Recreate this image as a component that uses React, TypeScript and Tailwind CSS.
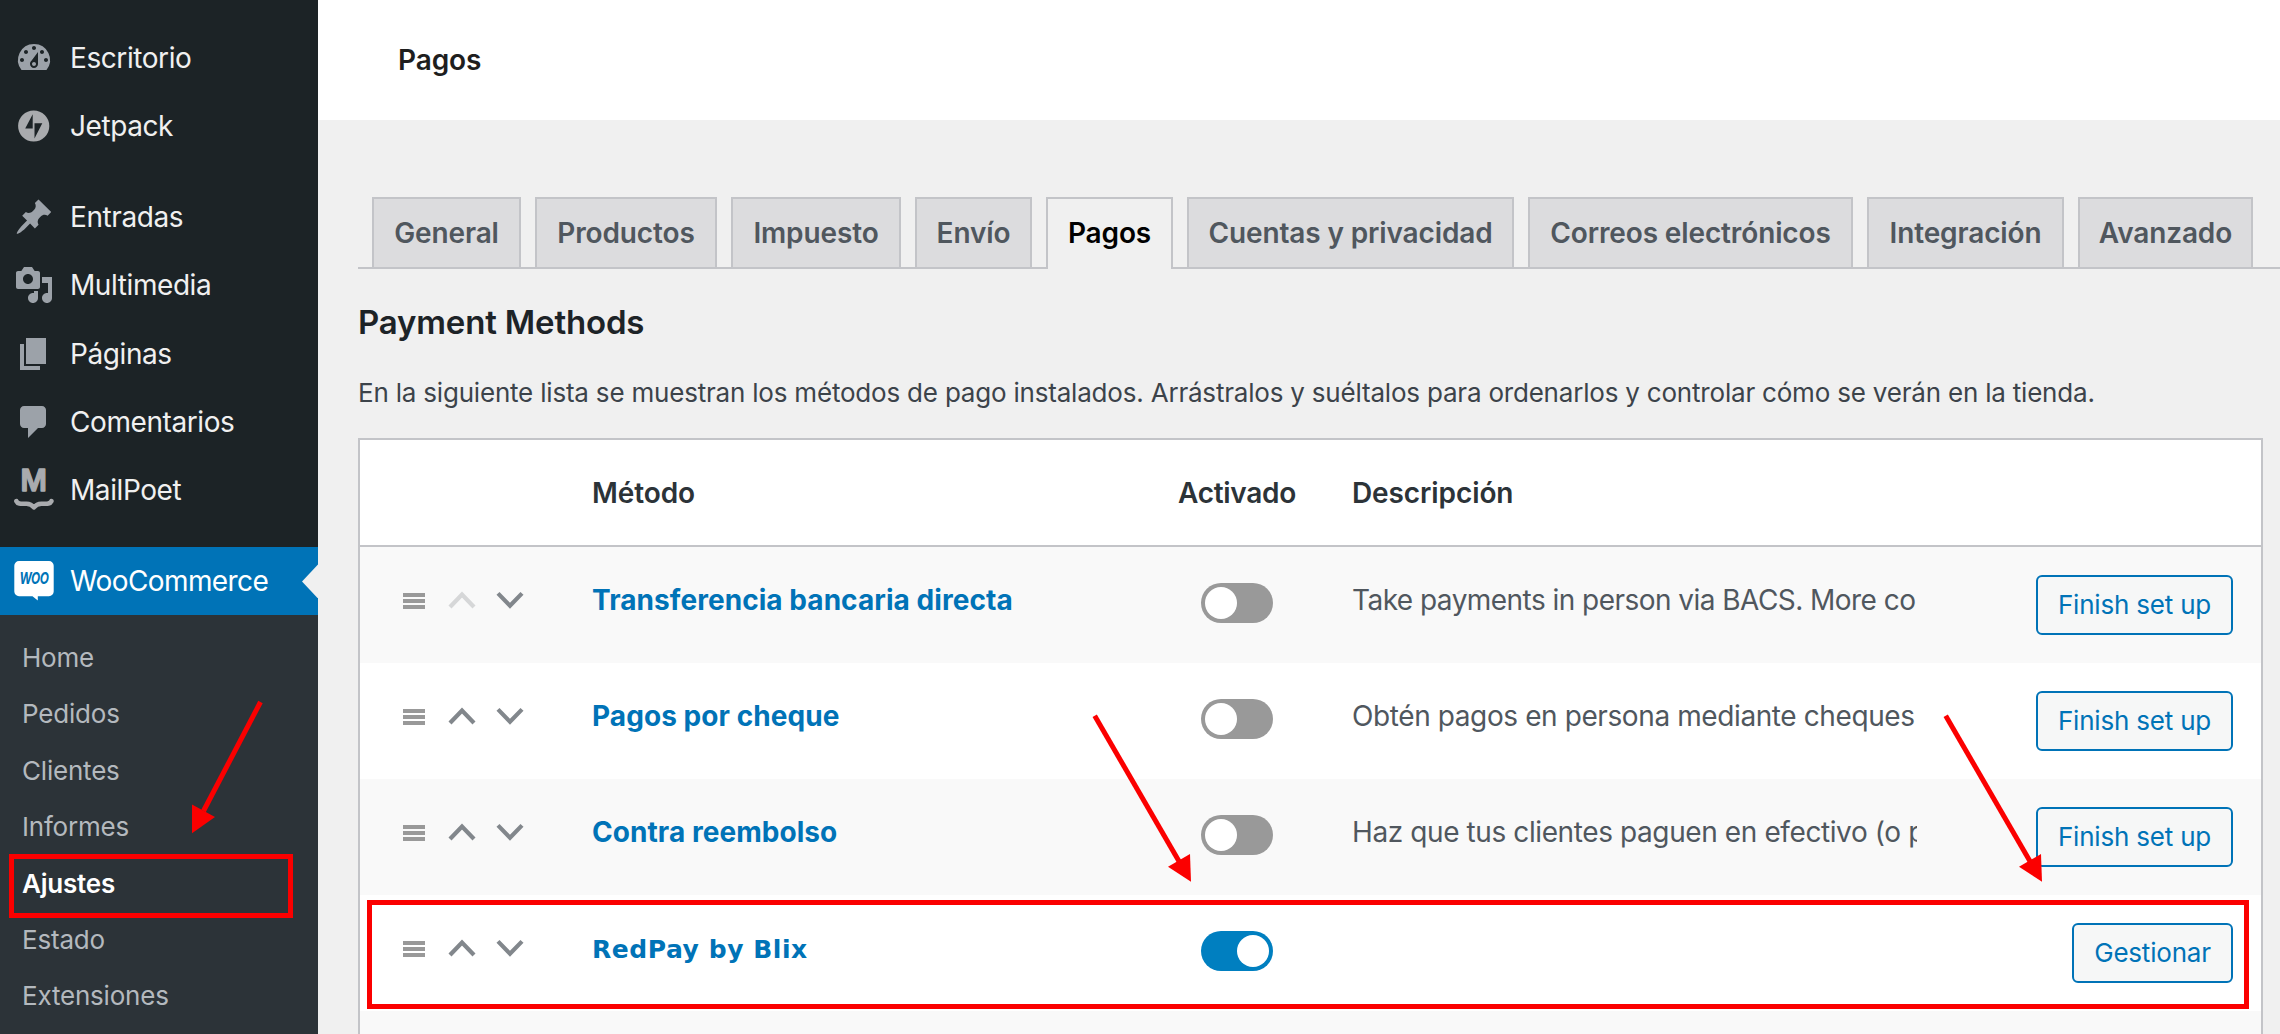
import type { ReactNode } from 'react';
import clsx from 'clsx';

function Dashicon({ d }: { d: string }) {
  return (
    <svg viewBox="0 0 20 20" className="h-10 w-10 fill-[#9ca2a9]">
      <path d={d} />
    </svg>
  );
}

const DASHBOARD =
  'M3.76 16h12.48A7.998 7.998 0 0 0 10 3a7.998 7.998 0 0 0-6.24 13zM10 4c.55 0 1 .45 1 1s-.45 1-1 1-1-.45-1-1 .45-1 1-1zM6 6c.55 0 1 .45 1 1s-.45 1-1 1-1-.45-1-1 .45-1 1-1zm8 0c.55 0 1 .45 1 1s-.45 1-1 1-1-.45-1-1 .45-1 1-1zm-5.37 5.55L12 7v6c0 1.1-.9 2-2 2s-2-.9-2-2c0-.57.24-1.08.63-1.45zM4 10c.55 0 1 .45 1 1s-.45 1-1 1-1-.45-1-1 .45-1 1-1zm12 0c.55 0 1 .45 1 1s-.45 1-1 1-1-.45-1-1 .45-1 1-1zm-5 3c0-.55-.45-1-1-1s-1 .45-1 1 .45 1 1 1 1-.45 1-1z';
const PIN =
  'M10.44 3.02l1.82-1.82 6.36 6.35-1.83 1.82c-1.05-.68-2.48-.57-3.41.36l-.75.75c-.92.93-1.04 2.35-.35 3.41l-1.83 1.82-2.41-2.41-2.8 2.79c-.42.42-3.38 2.71-3.8 2.29s1.86-3.39 2.28-3.81l2.79-2.79L4.1 9.36l1.83-1.82c1.05.69 2.48.57 3.4-.36l.75-.75c.93-.92 1.05-2.35.36-3.41z';
const MEDIA =
  'M13 11V4c0-.55-.45-1-1-1h-1.67L9 1H5L3.67 3H2c-.55 0-1 .45-1 1v7c0 .55.45 1 1 1h10c.55 0 1-.45 1-1zM7 4.500c1.380 0 2.500 1.120 2.500 2.500S8.380 9.500 7 9.500 4.500 8.380 4.500 7 5.620 4.500 7 4.500zM14 6h5v10.500c0 1.380-1.120 2.500-2.500 2.500S14 17.880 14 16.500s1.120-2.500 2.500-2.500c.17 0 .34.02.5.05V9h-3V6zm-4 8.050V13h2v3.500c0 1.380-1.120 2.500-2.500 2.500S7 17.880 7 16.500 8.120 14 9.500 14c.17 0 .34.02.5.05z';
const PAGES = 'M6 15V2h10v13H6zm-1 1h8v2H3V5h2v11z';
const COMMENTS =
  'M5 2h9c1.1 0 2 .9 2 2v7c0 1.1-.9 2-2 2h-2l-5 5v-5H5c-1.1 0-2-.9-2-2V4c0-1.1.9-2 2-2z';

function JetpackIcon() {
  return (
    <svg viewBox="0 0 40 40" className="h-10 w-10">
      <circle cx="19.7" cy="20" r="15.6" fill="#a9abae" />
      <path d="M18.7 8.3V22.6H11.2ZM20.5 17.3H28.3L20.5 32.4Z" fill="#1c2326" />
    </svg>
  );
}

function MailPoetIcon() {
  return (
    <svg viewBox="0 0 44 44" className="h-11 w-11 overflow-visible">
      <text
        x="21.6"
        y="23.4"
        textAnchor="middle"
        textLength="26"
        lengthAdjust="spacingAndGlyphs"
        className="fill-[#a9abae] stroke-[#a9abae] font-[Inter] text-[30px] font-semibold"
        strokeWidth="1.4"
        strokeLinejoin="round"
      >
        M
      </text>
      <path
        d="M4.400 33.200C6 36.600 10 35.600 14.500 35.700C18.500 35.800 20 36.900 21.900 39.400C23.800 36.900 25.300 35.800 29.300 35.700C33.800 35.600 37.800 36.600 39.400 33.200"
        fill="none"
        stroke="#a9abae"
        strokeWidth="4.6"
        strokeLinecap="round"
        strokeLinejoin="round"
      />
    </svg>
  );
}

function WooIcon() {
  return (
    <svg viewBox="0 0 40 40" className="h-10 w-10 overflow-visible">
      <path
        d="M5 0H35A4.700 4.700 0 0 1 39.700 4.700V30.500A4.700 4.700 0 0 1 35 35.200H23.800V39.600L18.500 35.200H5A4.700 4.700 0 0 1 .3 30.500V4.700A4.700 4.700 0 0 1 5 0Z"
        fill="#fff"
      />
      <text
        x="5.5"
        y="23.4"
        textLength="29"
        lengthAdjust="spacingAndGlyphs"
        className="fill-[#0073b7] font-[Inter] text-[16.500px] font-bold italic"
      >
        WOO
      </text>
    </svg>
  );
}

type MenuEntry = { label: string; icon: ReactNode };

const firstGroup: MenuEntry[] = [
  { label: 'Escritorio', icon: <Dashicon d={DASHBOARD} /> },
  { label: 'Jetpack', icon: <JetpackIcon /> },
];
const secondGroup: MenuEntry[] = [
  { label: 'Entradas', icon: <Dashicon d={PIN} /> },
  { label: 'Multimedia', icon: <Dashicon d={MEDIA} /> },
  { label: 'Páginas', icon: <Dashicon d={PAGES} /> },
  { label: 'Comentarios', icon: <Dashicon d={COMMENTS} /> },
  { label: 'MailPoet', icon: <MailPoetIcon /> },
];
const submenu = ['Home', 'Pedidos', 'Clientes', 'Informes', 'Ajustes', 'Estado', 'Extensiones'];

function MenuItem({ label, icon, active }: MenuEntry & { active?: boolean }) {
  return (
    <li
      className={clsx(
        'relative flex h-[68.4px] items-center text-[28px]',
        active ? 'bg-[#0073b7] tracking-[-0.6px] text-white' : 'tracking-[-0.42px] text-[#f0f0f0]',
      )}
    >
      <span className="flex w-[70px] shrink-0 justify-center pr-[2px]">{icon}</span>
      {label}
      {active && (
        <span className="absolute top-[17.5px] right-0 h-[34px] w-4 bg-[#f0f0f0] [clip-path:polygon(100%_0,0_50%,100%_100%)]" />
      )}
    </li>
  );
}

function Sidebar() {
  return (
    <nav className="relative flex w-[318px] shrink-0 flex-col bg-[#1c2326] pt-[23.8px]">
      <ul className="flex flex-col">
        {firstGroup.map((m) => (
          <MenuItem key={m.label} {...m} />
        ))}
      </ul>
      <ul className="mt-[22px] flex flex-col">
        {secondGroup.map((m) => (
          <MenuItem key={m.label} {...m} />
        ))}
      </ul>
      <ul className="mt-[22.4px] flex flex-col">
        <MenuItem label="WooCommerce" icon={<WooIcon />} active />
      </ul>
      <ul className="flex grow flex-col bg-[#2c3338] pt-[14px] text-[26px] tracking-[-0.2px] text-[#b4b9be]">
        {submenu.map((s) => (
          <li
            key={s}
            className={clsx(
              'flex h-[56.4px] shrink-0 items-center pl-[22px]',
              s === 'Ajustes' && 'font-semibold text-white',
            )}
          >
            {s}
          </li>
        ))}
      </ul>
    </nav>
  );
}

const tabs = [
  { label: 'General', width: 'w-[149px]' },
  { label: 'Productos', width: 'w-[182px]' },
  { label: 'Impuesto', width: 'w-[170px]' },
  { label: 'Envío', width: 'w-[117px]' },
  { label: 'Pagos', width: 'w-[127px]', active: true },
  { label: 'Cuentas y privacidad', width: 'w-[327px]' },
  { label: 'Correos electrónicos', width: 'w-[325px]' },
  { label: 'Integración', width: 'w-[197px]' },
  { label: 'Avanzado', width: 'w-[175px]' },
];

function Tabs() {
  return (
    <div className="flex h-[72px] gap-[14px] border-b-2 border-[#c3c4c8] pl-[14px] text-[28px] font-semibold tracking-[-0.13px]">
      {tabs.map((t) => (
        <div
          key={t.label}
          className={clsx(
            'flex shrink-0 items-center justify-center border-2 border-b-0 border-[#c3c4c8] whitespace-nowrap',
            t.width,
            t.active ? '-mb-[2px] bg-[#f0f0f0] pb-[2px] text-black' : 'bg-[#dcdcde] text-[#50575e]',
          )}
        >
          {t.label}
        </div>
      ))}
    </div>
  );
}

type Method = { name: string; desc: string; button: string; on?: boolean; first?: boolean };

const methods: Method[] = [
  { name: 'Transferencia bancaria directa', desc: 'Take payments in person via BACS. More co', button: 'Finish set up', first: true },
  { name: 'Pagos por cheque', desc: 'Obtén pagos en persona mediante cheques', button: 'Finish set up' },
  { name: 'Contra reembolso', desc: 'Haz que tus clientes paguen en efectivo (o p', button: 'Finish set up' },
  { name: 'RedPay by Blix', desc: '', button: 'Gestionar', on: true },
];

function SortHandles({ first }: { first?: boolean }) {
  return (
    <div className="flex pt-[44px] pl-[43px]">
      <svg viewBox="0 0 22 20" className="h-5 w-[22px] fill-[#999]">
        <path d="M0 2H22V6H0ZM0 8H22V12H0ZM0 14H22V18H0Z" />
      </svg>
      <svg
        viewBox="0 0 28 20"
        className={clsx('ml-[23px] h-5 w-7 fill-none', first ? 'stroke-[#d6d7d8]' : 'stroke-[#82878c]')}
        strokeWidth="4.2"
      >
        <path d="M2 16L14 3.6L26 16" />
      </svg>
      <svg viewBox="0 0 28 20" className="ml-5 h-5 w-7 fill-none stroke-[#82878c]" strokeWidth="4.2">
        <path d="M2 2.4L14 14.8L26 2.4" />
      </svg>
    </div>
  );
}

function Toggle({ on }: { on?: boolean }) {
  return (
    <span
      className={clsx(
        'flex h-10 w-[72px] rounded-full p-1',
        on ? 'justify-end bg-[#007fc0]' : 'bg-[#999]',
      )}
    >
      <span className="h-8 w-8 rounded-full bg-white" />
    </span>
  );
}

function MethodsTable() {
  return (
    <div className="mt-[26px] w-[1905px] grow border-2 border-b-0 border-[#c3c4c8] bg-white">
      <div className="grid h-[107px] grid-cols-[232px_580px_130px_1fr] items-center border-b-2 border-[#c3c4c8] text-[28px] font-semibold tracking-[-0.1px] text-[#2c3338]">
        <span />
        <span>Método</span>
        <span className="text-center tracking-[-0.3px]">Activado</span>
        <span className="pl-[50px]">Descripción</span>
      </div>
      {methods.map((m) => (
        <div
          key={m.name}
          className="grid h-[116px] grid-cols-[232px_580px_130px_615px_1fr] items-start text-[28px] leading-9 even:bg-[#f9f9f9]"
        >
          <SortHandles first={m.first} />
          <a
            className={clsx(
              'font-bold text-[#0073b7]',
              m.on
                ? 'pt-[37px] font-["DejaVu_Sans"] text-[25px] tracking-[0.55px]'
                : 'pt-[35px] tracking-[0.06px]',
            )}
          >
            {m.name}
          </a>
          <div className="flex justify-center pt-9">
            <Toggle on={m.on} />
          </div>
          <p
            className={clsx(
              'ml-[50px] overflow-hidden pt-[35px] whitespace-nowrap text-[#50575e]',
              m.first ? 'tracking-[-0.54px]' : 'tracking-[-0.4px]',
            )}
          >
            {m.desc}
          </p>
          <div className="flex justify-end pt-7 pr-7">
            <button
              className={clsx(
                'h-[60px] rounded-md border-2 border-[#0073b7] bg-[#f6f7f7] text-[26px] tracking-[-0.2px] text-[#0073b7]',
                m.on ? 'w-[161px]' : 'w-[197px]',
              )}
            >
              {m.button}
            </button>
          </div>
        </div>
      ))}
      <div className="h-6 bg-[#f9f9f9]" />
    </div>
  );
}

function Arrow({ mirrored, className }: { mirrored?: boolean; className: string }) {
  return (
    <svg
      viewBox="0 0 110 180"
      className={clsx('pointer-events-none absolute h-[180px] w-[110px] fill-[#fb0000] stroke-[#fb0000]', className)}
    >
      {mirrored ? (
        <>
          <path d="M80.5 12L23.5 121" strokeWidth="5" />
          <path d="M12 114.5L35 127L12 143.3Z" stroke="none" />
        </>
      ) : (
        <>
          <path d="M4.7 5.7L90 153" strokeWidth="5" />
          <path d="M100 144L78 156.7L101 171.7Z" stroke="none" />
        </>
      )}
    </svg>
  );
}

export default function App() {
  return (
    <div className="relative flex h-[1034px] w-[2280px] overflow-hidden bg-[#f0f0f0] font-[Inter,sans-serif]">
      <Sidebar />
      <main className="flex min-w-0 grow flex-col">
        <header className="flex h-[120px] shrink-0 items-center bg-white pl-[80px] text-[28px] font-semibold tracking-[-0.1px] text-[#1e1e1e]">
          Pagos
        </header>
        <section className="flex grow flex-col pt-[77px] pl-10">
          <Tabs />
          <h2 className="mt-[33px] text-[33px] leading-10 font-semibold tracking-[-0.17px] text-[#1d2327]">
            Payment Methods
          </h2>
          <p className="mt-[32px] text-[26px] leading-[38px] tracking-[-0.2px] whitespace-nowrap text-[#3c434a]">
            En la siguiente lista se muestran los métodos de pago instalados. Arrástralos y suéltalos para ordenarlos y
            controlar cómo se verán en la tienda.
          </p>
          <MethodsTable />
        </section>
      </main>

      <div className="absolute top-[854px] left-[9px] h-[64px] w-[284px] border-[5px] border-[#fb0000]" />
      <div className="absolute top-[900px] left-[367px] h-[109px] w-[1882px] border-[5px] border-[#fb0000]" />
      <Arrow mirrored className="top-[690px] left-[180px]" />
      <Arrow className="top-[710px] left-[1090px]" />
      <Arrow className="top-[710px] left-[1940.5px]" />
    </div>
  );
}
